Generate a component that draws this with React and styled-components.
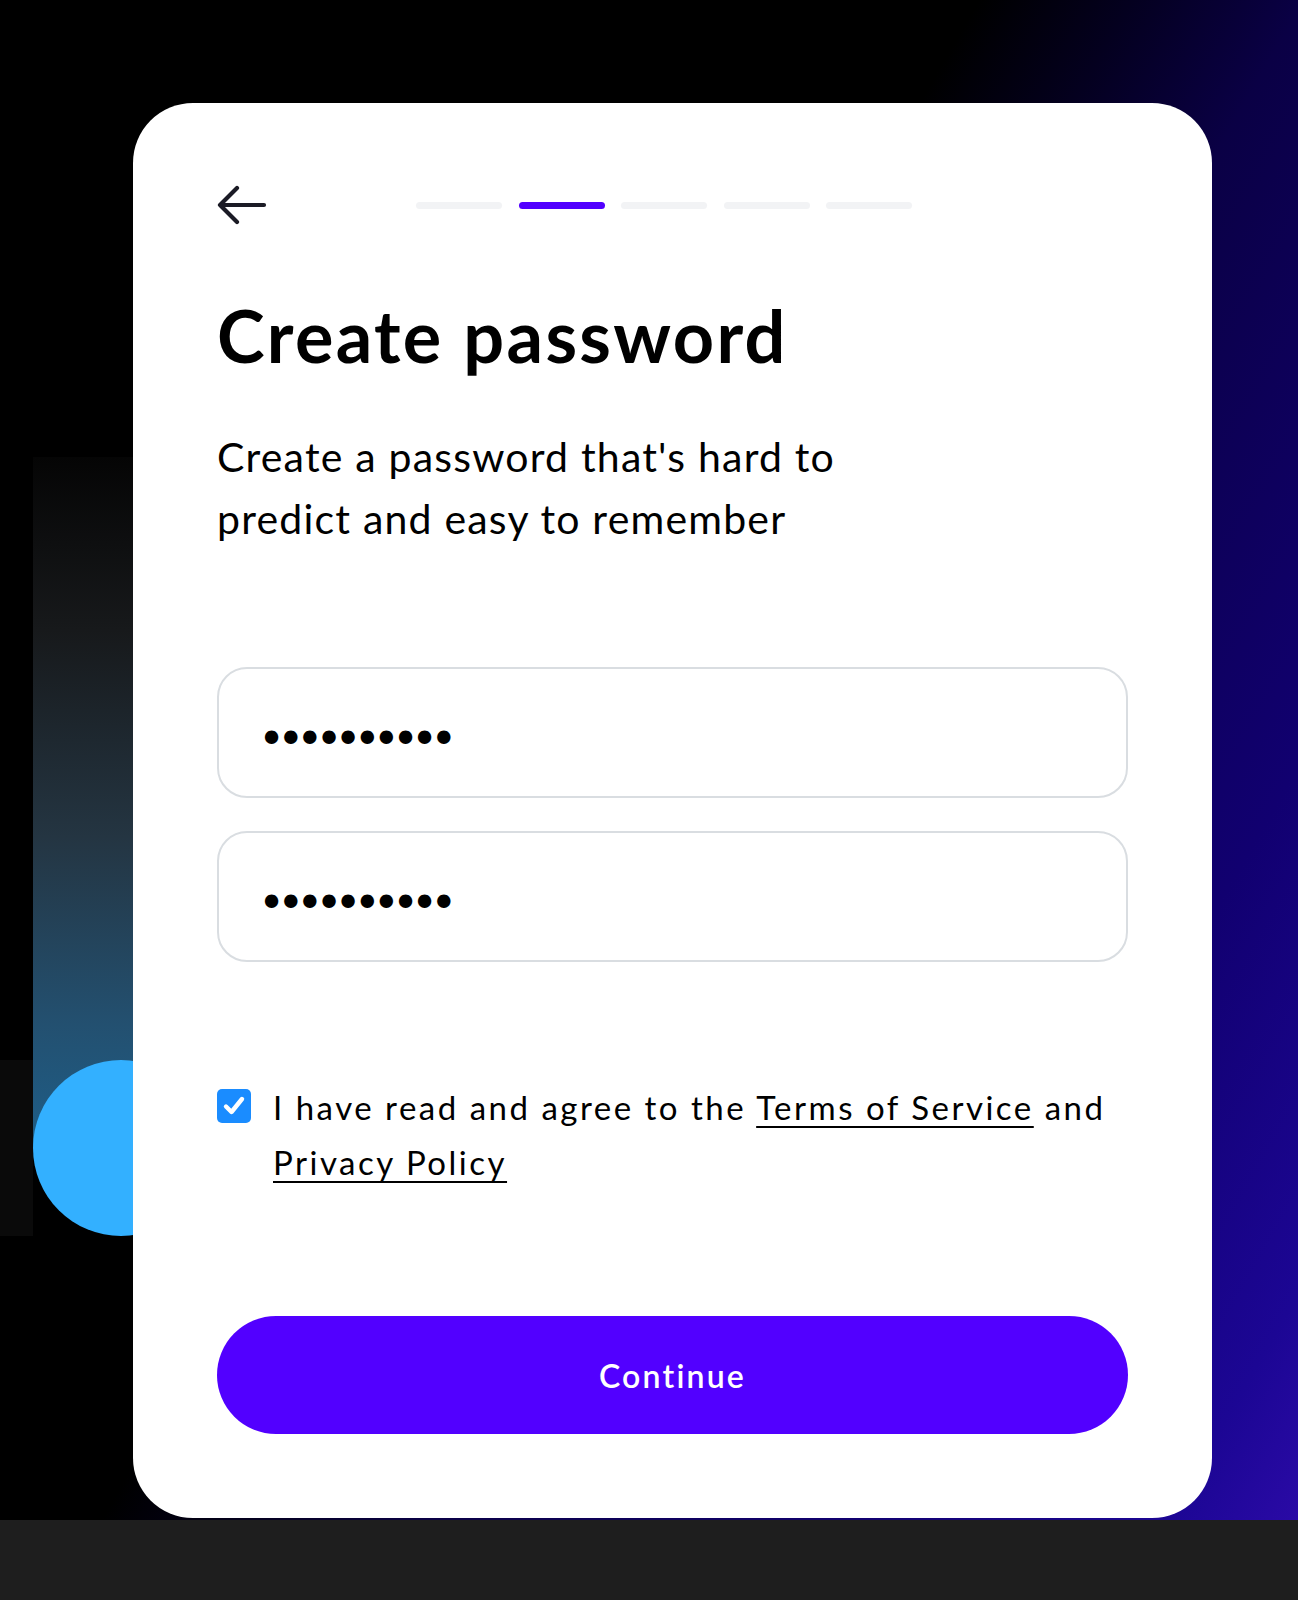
import styled, { createGlobalStyle } from 'styled-components';

const GlobalStyle = createGlobalStyle`
  html, body {
    margin: 0;
    padding: 0;
    background: #1e1e1e;
  }
  * {
    box-sizing: border-box;
  }
`;

const steps = [false, true, false, false, false];

const App = () => {
  return (
    <>
      <GlobalStyle />
      <Stage>
        <GlowTube />
        <GlowEdge />
        <GlowBall />
        <Card>
          <Header>
            <BackButton aria-label="Back">
              <svg width="50" height="40" viewBox="0 0 50 40" fill="none">
                <path
                  d="M20 3 L3 20 L20 37 M3 20 H47"
                  stroke="#1b1b25"
                  strokeWidth="4.2"
                  strokeLinecap="round"
                  strokeLinejoin="round"
                />
              </svg>
            </BackButton>
            <Steps>
              {steps.map((on, i) => (
                <Step key={i} $active={on} />
              ))}
            </Steps>
          </Header>

          <Title>Create password</Title>
          <Lead>
            Create a password that's hard to
            <br />
            predict and easy to remember
          </Lead>

          <Fields>
            <Field type="password" value="password12" readOnly />
            <Field type="password" value="password12" readOnly />
          </Fields>

          <Agree>
            <CheckBox>
              <svg width="26" height="26" viewBox="0 0 26 26" fill="none">
                <path
                  d="M5 13.5 L10.5 19 L21 6"
                  stroke="#fff"
                  strokeWidth="4.4"
                  strokeLinecap="round"
                  strokeLinejoin="round"
                />
              </svg>
            </CheckBox>
            <AgreeText>
              I have read and agree to the <Link>Terms of Service</Link> and{' '}
              <Link>Privacy Policy</Link>
            </AgreeText>
          </Agree>

          <ContinueButton>Continue</ContinueButton>
        </Card>
      </Stage>
      <Footer />
    </>
  );
};

export default App;

const Stage = styled.div`
  position: relative;
  height: 1520px;
  padding: 103px 0 0 133px;
  overflow: hidden;
  background: linear-gradient(
    120deg,
    #000 45%,
    #04001f 52%,
    #0a0045 60%,
    #110070 80%,
    #1c0694 94%,
    #2a0aa6 100%
  );
`;

/* decorative shapes behind the card */
const GlowTube = styled.div`
  position: absolute;
  left: 33px;
  top: 457px;
  width: 176px;
  height: 691px;
  background: linear-gradient(
    to bottom,
    #050505 0%,
    #17191b 25%,
    #243542 55%,
    #235070 82%,
    #1e5e88 100%
  );
`;

const GlowEdge = styled.div`
  position: absolute;
  left: 0;
  top: 1060px;
  width: 33px;
  height: 176px;
  background: #0a0a0a;
`;

const GlowBall = styled.div`
  position: absolute;
  left: 33px;
  top: 1060px;
  width: 176px;
  height: 176px;
  border-radius: 50%;
  background: #33b0ff;
`;

const Card = styled.div`
  position: relative;
  z-index: 1;
  width: 1079px;
  height: 1415px;
  background: #fff;
  border-radius: 60px;
  padding: 84px;
  display: flex;
  flex-direction: column;
  font-family: Lato, 'Noto Sans', sans-serif;
  color: #000;
`;

const Header = styled.div`
  display: flex;
  align-items: center;
  height: 36px;
`;

const BackButton = styled.button`
  width: 199px;
  height: 40px;
  padding: 0;
  margin: 0;
  border: none;
  background: none;
  display: flex;
  align-items: center;
  cursor: pointer;
`;

const Steps = styled.div`
  display: flex;
  gap: 16.5px;
`;

const Step = styled.span`
  display: block;
  width: 86px;
  height: 7px;
  border-radius: 4px;
  background: ${({ $active }) => ($active ? '#5200ff' : '#f2f3f5')};
`;

const Title = styled.h1`
  margin: 76px 0 0;
  font-size: 72px;
  line-height: 72px;
  font-weight: 700;
  letter-spacing: 2.3px;
`;

const Lead = styled.p`
  margin: 55px 0 0;
  font-size: 41px;
  line-height: 62px;
  font-weight: 400;
  letter-spacing: 1.2px;
`;

const Fields = styled.div`
  margin-top: 117px;
  display: flex;
  flex-direction: column;
  gap: 33px;
`;

const Field = styled.input`
  width: 100%;
  height: 131px;
  border: 2px solid #d9dde1;
  border-radius: 30px;
  padding: 12px 39px 0;
  font-family: 'DejaVu Sans', sans-serif;
  font-size: 46px;
  letter-spacing: -8px;
  color: #000;
  background: #fff;
  outline: none;
`;

const Agree = styled.div`
  margin-top: 118px;
  display: flex;
  align-items: flex-start;
  gap: 22px;
`;

const CheckBox = styled.span`
  flex: none;
  width: 34px;
  height: 34px;
  margin-top: 9px;
  border-radius: 5px;
  background: #1a8cff;
  display: flex;
  align-items: center;
  justify-content: center;
`;

const AgreeText = styled.p`
  margin: 0;
  font-size: 33px;
  line-height: 55px;
  font-weight: 400;
  letter-spacing: 2.5px;
`;

const Link = styled.a`
  color: #000;
  text-decoration: underline;
  text-decoration-thickness: 2px;
  text-underline-offset: 6px;
  cursor: pointer;
`;

const ContinueButton = styled.button`
  margin-top: auto;
  width: 100%;
  height: 118px;
  border: none;
  border-radius: 59px;
  background: #5200ff;
  color: #fff;
  font-family: Lato, 'Noto Sans', sans-serif;
  font-size: 32px;
  font-weight: 600;
  letter-spacing: 2.2px;
  cursor: pointer;
`;

const Footer = styled.div`
  height: 80px;
  background: #1e1e1e;
`;
